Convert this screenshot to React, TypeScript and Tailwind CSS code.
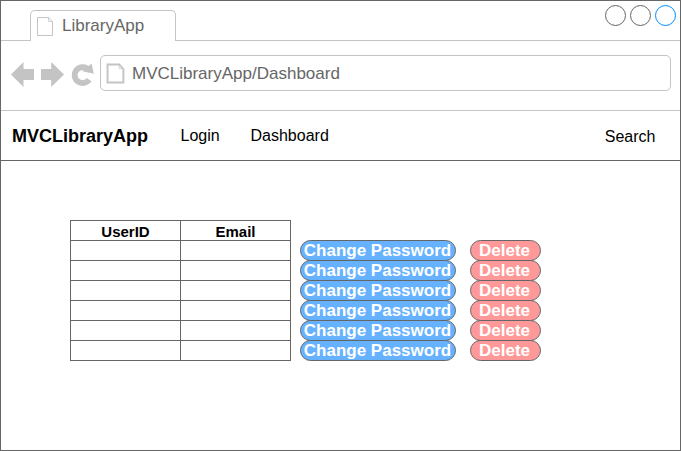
import React from "react";

function PageIcon({ width, height, strokeWidth }: { width: number; height: number; strokeWidth: number }) {
  return (
    <svg width={width} height={height} viewBox="0 0 17 20" preserveAspectRatio="none" fill="none" stroke="#c4c4c4" className="shrink-0 overflow-visible">
      <path d="M.5 .5H11.5L15.5 5V18.5H.5Z" strokeWidth={strokeWidth} />
      <path d="M11.5 .5V4.5H15.5" strokeWidth={0.7} />
    </svg>
  );
}

function NavigationIcons() {
  return (
    <svg width="84" height="28" viewBox="11 61 84 28" fill="#c4c4c4" className="ml-[10px] shrink-0">
      <path d="M11 74.5L23.5 62V69H34V80H23.5V87Z" />
      <path d="M64 74.5L51.2 62V69H41V80H51.2V87Z" />
      <path d="M88.6 70A7.9 7.9 0 1 0 89.1 79.6" fill="none" stroke="#c4c4c4" strokeWidth="5.8" />
      <path d="M91.6 63.4L93.8 73.8L82.4 71.3Z" />
    </svg>
  );
}

const rows = [1, 2, 3, 4, 5, 6];

export default function App() {
  return (
    <div className="flex h-[451px] w-[681px] flex-col overflow-hidden border border-[#666] bg-white font-['Liberation_Sans',Arial,sans-serif] text-black">
      <div className="flex h-10 shrink-0">
        <div className="w-[29px] border-b border-[#c4c4c4]" />
        <div className="mt-[9px] flex w-[146px] rounded-t-[5px] border border-b-0 border-[#c4c4c4] pl-[6px] pt-[6px] text-[17px] leading-[17px] text-[#666]">
          <PageIcon width={17} height={20} strokeWidth={1} />
          <span className="ml-2">LibraryApp</span>
        </div>
        <div className="flex flex-1 justify-end gap-1 border-b border-[#c4c4c4] pr-1 pt-1">
          <span className="h-[21px] w-[21px] rounded-full border border-[#666]" />
          <span className="h-[21px] w-[21px] rounded-full border border-[#666]" />
          <span className="h-[21px] w-[21px] rounded-full border border-[#008cff]" />
        </div>
      </div>

      <div className="flex h-[70px] shrink-0 border-b border-[#c4c4c4] pt-[14px]">
        <div className="pt-[6px]">
          <NavigationIcons />
        </div>
        <div className="ml-[5px] flex h-9 w-[571px] rounded-[5px] border border-[#c4c4c4] pl-[6px] pt-2">
          <PageIcon width={18} height={20} strokeWidth={1.8} />
          <span className="ml-[7px] text-[17px] leading-[19px] text-[#666]">MVCLibraryApp/Dashboard</span>
        </div>
      </div>

      <nav className="flex h-[50px] shrink-0 items-center border-b border-[#666] pl-[11px] pr-[24.5px] text-[16px]">
        <span className="mt-[2px] w-[168.5px] text-[18px] font-bold">MVCLibraryApp</span>
        <span className="w-[70px]">Login</span>
        <span>Dashboard</span>
        <span className="ml-auto mt-[2px]">Search</span>
      </nav>

      <main className="flex pl-[69px] pt-[59px]">
        <div className="w-[221px] border-l border-t border-[#666]">
          <div className="grid h-5 grid-cols-2 border-b border-[#666] text-center text-[15px] font-bold leading-[22px]">
            <div className="h-[19px] border-r border-[#666]">UserID</div>
            <div className="h-[19px] border-r border-[#666]">Email</div>
          </div>
          {rows.map((row) => (
            <div key={row} className="grid h-5 grid-cols-2 border-b border-[#666]">
              <div className="border-r border-[#666]" />
              <div className="border-r border-[#666]" />
            </div>
          ))}
        </div>
        <div className="ml-[9px] flex flex-col pt-5">
          {rows.map((row) => (
            <div key={row} className="-mb-px flex gap-[14px] text-[17px] font-bold leading-[19px] text-white">
              <button className="h-[21px] w-[156px] whitespace-nowrap rounded-full border border-[#666] bg-[#66b2ff] pr-px">Change Password</button>
              <button className="h-[21px] w-[71px] rounded-full border border-[#666] bg-[#ff9999] pr-[2px]">Delete</button>
            </div>
          ))}
        </div>
      </main>
    </div>
  );
}
